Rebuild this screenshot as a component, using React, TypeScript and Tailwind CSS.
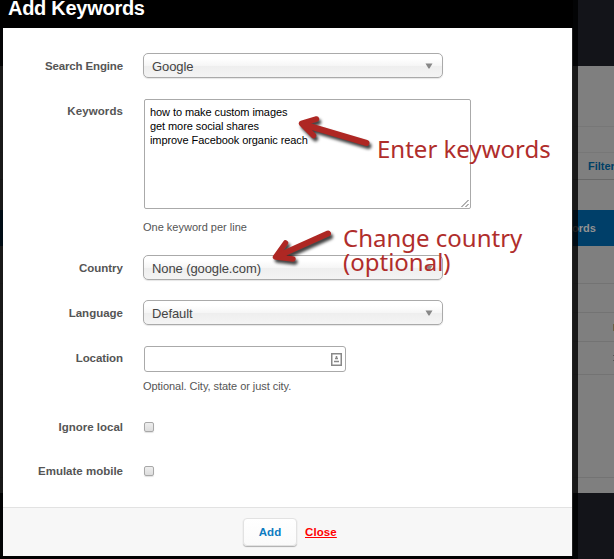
import type { ReactNode } from "react";

function Row({ label, labelClass, className, children }: { label: string; labelClass: string; className: string; children: ReactNode }) {
  return (
    <div className={`flex items-start ${className}`}>
      <div className={`w-[120px] shrink-0 text-right text-[11.5px] leading-4 font-bold text-[#555] ${labelClass}`}>{label}</div>
      <div className="ml-5">{children}</div>
    </div>
  );
}

function SelectBox({ value }: { value: string }) {
  return (
    <div className="flex h-[25px] w-[300px] items-center justify-between rounded-[5px] border border-[#aaa] bg-[linear-gradient(#fff_20%,#f6f6f6_50%,#eee_52%,#f4f4f4_100%)] pr-[9px] pl-2 text-[13px] tracking-[-0.1px] text-[#444] shadow-[0_1px_1px_rgba(0,0,0,0.1)]">
      <span className="pt-[2px]">{value}</span>
      <svg width="8" height="6" viewBox="0 0 8 6">
        <path d="M0.5 0.5H7.5L4.5 5.5H3.5Z" fill="#888" />
      </svg>
    </div>
  );
}

function Checkbox() {
  return (
    <div className="mt-[3px] ml-px h-[10px] w-[10px] rounded-[2px] border border-[#a8a8a8] bg-linear-to-b from-[#eee] to-[#ddd] shadow-[0_1px_1px_rgba(0,0,0,0.12)]" />
  );
}

function Backdrop() {
  return (
    <div className="flex h-full flex-col bg-[#131419]">
      <div className="h-[66px] shrink-0" />
      <div className="h-[427px] shrink-0 bg-[#7f7f7f] text-[11px] font-bold">
        <div className="h-[61px] border-b border-[#777]" />
        <div className="h-[26px] border-b border-[#777]" />
        <div className="h-[27px] border-b border-[#686868] pt-[5px] pl-[588px] leading-4 text-[#004066]">Filter</div>
        <div className="h-[30px]" />
        <div className="h-9 bg-[#003f69] pt-[10px] pl-[572px] leading-4 whitespace-nowrap text-[#929292]">ords</div>
        <div className="h-[38px] border-b border-[#737373]" />
        <div className="h-[29px] border-b border-[#737373]" />
        <div className="flex h-[29px] items-center justify-end border-b border-[#737373]">
          <div className="h-[7px] w-px bg-[#6a6044]" />
        </div>
        <div className="flex h-[33px] items-center justify-end border-b border-[#737373]">
          <div className="h-[6px] w-px border-y border-[#555]" />
        </div>
        <div className="h-[103px] border-b border-[#737373]" />
      </div>
    </div>
  );
}

function Arrow({ head, barbs, shaft, className }: { head: string; barbs: string; shaft: string; className: string }) {
  return (
    <svg
      width="75"
      height="32"
      className={`absolute overflow-visible drop-shadow-[2px_3px_1.5px_rgba(0,0,0,0.75)] ${className}`}
      stroke="#ae2723"
      strokeLinejoin="round"
      strokeLinecap="round"
    >
      <path d={head} fill="#ae2723" stroke="none" />
      <path d={barbs} fill="none" strokeWidth="5.5" />
      <path d={shaft} fill="none" strokeWidth="6" />
    </svg>
  );
}

export default function App() {
  return (
    <div className="relative h-[559px] w-[614px] overflow-hidden font-['Liberation_Sans',Arial,sans-serif]">
      <Backdrop />
      <div className="absolute inset-y-0 left-0 w-[578px] bg-black/80" />
      <div className="absolute top-0 left-0 h-[559px] w-[573px]">
        <h1 className="h-[28px] bg-black pl-2 text-[20px] leading-[17px] font-bold tracking-[-0.28px] text-white">Add Keywords</h1>
        <div className="ml-[3px] flex h-[528px] w-[570px] flex-col border-r border-[#222] bg-white">
          <div className="h-[479px] shrink-0 pt-[25px]">
            <Row label="Search Engine" labelClass="pt-[5px] tracking-[-0.14px]" className="h-[45px]">
              <SelectBox value="Google" />
            </Row>
            <Row label="Keywords" labelClass="pt-[5px] tracking-[0.1px]" className="h-[157px]">
              <div className="mt-px ml-px flex h-[110px] w-[327px] items-end justify-between rounded-[2px] border border-[#aaa] bg-white text-[11px] leading-[14px] text-black">
                <div className="self-start pt-[5px] pl-[5px] tracking-[-0.08px]">
                  <div>how to make custom images</div>
                  <div>get more social shares</div>
                  <div>improve Facebook organic reach</div>
                </div>
                <svg width="9" height="9" viewBox="0 0 9 9">
                  <path d="M0.5 8L7.5 1M4.5 8L7.5 5" stroke="#666" strokeWidth="1" />
                </svg>
              </div>
              <div className="mt-[10px] text-[11px] leading-4 text-[#555]">One keyword per line</div>
            </Row>
            <Row label="Country" labelClass="pt-[5px]" className="h-[45px]">
              <SelectBox value="None (google.com)" />
            </Row>
            <Row label="Language" labelClass="pt-[5px]" className="h-[45px]">
              <SelectBox value="Default" />
            </Row>
            <Row label="Location" labelClass="pt-[5px] tracking-[-0.08px]" className="h-[69px]">
              <div className="mt-px ml-px flex h-[26px] w-[202px] items-center justify-end rounded-[3px] border border-[#aaa] bg-white pr-[3px]">
                <svg width="11" height="13" viewBox="0 0 11 13">
                  <rect x="0.75" y="0.75" width="9.5" height="11.5" fill="#fff" stroke="#888" strokeWidth="1.5" />
                  <path d="M5.5 3V6M4 5.5H7M3 8.5H8" stroke="#888" strokeWidth="1.5" />
                </svg>
              </div>
              <div className="mt-[6px] text-[11px] leading-4 tracking-[-0.05px] text-[#555]">Optional. City, state or just city.</div>
            </Row>
            <Row label="Ignore local" labelClass="" className="h-[44px] pt-[5px]">
              <Checkbox />
            </Row>
            <Row label="Emulate mobile" labelClass="" className="pt-[5px]">
              <Checkbox />
            </Row>
          </div>
          <div className="flex flex-1 items-center border-t border-[#e2e2e2] bg-[#f7f7f7] pl-[240px] text-[11.5px] font-bold">
            <div className="flex h-[28px] w-[54px] items-center justify-center rounded-[4px] border border-[#e2e2e2] bg-linear-to-b from-white to-[#fafafa] text-[#0b7bc1] shadow-[0_1px_1px_rgba(0,0,0,0.3)]">
              <span className="pt-px">Add</span>
            </div>
            <a className="ml-2 pt-px tracking-[0.1px] text-[#ff0000] underline">Close</a>
          </div>
        </div>
        <div className="h-[3px] bg-black" />
      </div>
      <Arrow
        className="top-[115px] left-[298px]"
        head="M3 8L13 5L13 12L10 15Z"
        barbs="M18.5 4L3.5 8.5L15.5 20.5"
        shaft="M6 9.5L68.5 28"
      />
      <Arrow
        className="top-[229px] left-[271px]"
        head="M4 28L9 20L15 23L16 29Z"
        barbs="M14.5 14L4.5 28L22 30"
        shaft="M8 26.5L57 4.5"
      />
      <div className="absolute top-[133px] left-[377px] font-['Noto_Sans',sans-serif] text-[24px] leading-[32px] whitespace-nowrap text-[#b02d2b]">Enter keywords</div>
      <div className="absolute top-[226px] left-[343px] font-['Noto_Sans',sans-serif] text-[24px] leading-[24px] whitespace-nowrap text-[#b02d2b]">
        Change country<br />(optional)
      </div>
    </div>
  );
}
